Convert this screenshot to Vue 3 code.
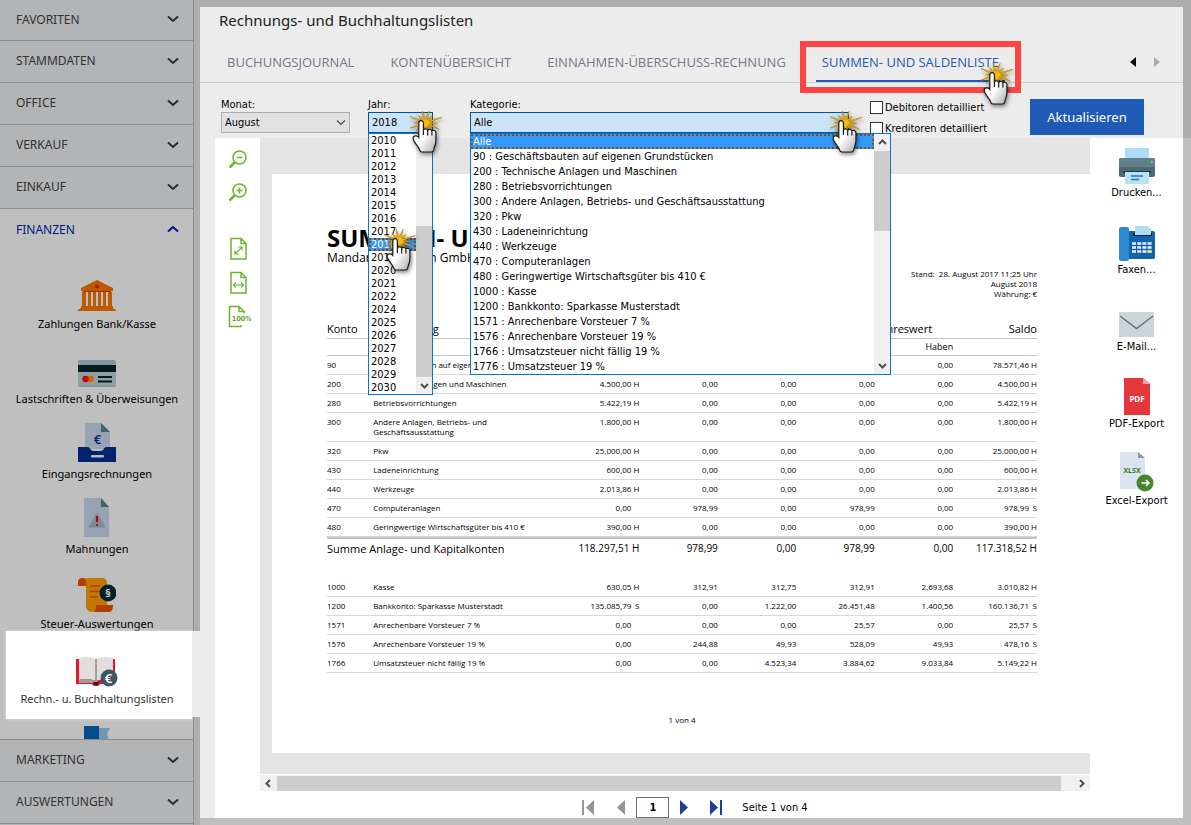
<script setup>
import { ref, computed } from 'vue'

const topSections = ['FAVORITEN', 'STAMMDATEN', 'OFFICE', 'VERKAUF', 'EINKAUF']
const bottomSections = ['MARKETING', 'AUSWERTUNGEN']

const financeItems = [
  { icon: 'bank', label: 'Zahlungen Bank/Kasse' },
  { icon: 'card', label: 'Lastschriften & Überweisungen' },
  { icon: 'inbox', label: 'Eingangsrechnungen' },
  { icon: 'warning', label: 'Mahnungen' },
  { icon: 'tax', label: 'Steuer-Auswertungen' },
  { icon: 'book', label: 'Rechn.- u. Buchhaltungslisten', active: true },
  { icon: 'flag', label: '' }
]

const tabs = ['BUCHUNGSJOURNAL', 'KONTENÜBERSICHT', 'EINNAHMEN-ÜBERSCHUSS-RECHNUNG', 'SUMMEN- UND SALDENLISTE']
const activeTab = ref('SUMMEN- UND SALDENLISTE')

const month = ref('August')
const year = ref('2018')
const category = ref('Alle')
const debitors = ref(false)
const creditors = ref(false)

const years = [
  '2010', '2011', '2012', '2013', '2014', '2015', '2016', '2017', '2018', '2019',
  '2020', '2021', '2022', '2024', '2025', '2026', '2027', '2028', '2029', '2030'
]

const categories = [
  'Alle',
  '90 : Geschäftsbauten auf eigenen Grundstücken',
  '200 : Technische Anlagen und Maschinen',
  '280 : Betriebsvorrichtungen',
  '300 : Andere Anlagen, Betriebs- und Geschäftsausstattung',
  '320 : Pkw',
  '430 : Ladeneinrichtung',
  '440 : Werkzeuge',
  '470 : Computeranlagen',
  '480 : Geringwertige Wirtschaftsgüter bis 410 €',
  '1000 : Kasse',
  '1200 : Bankkonto: Sparkasse Musterstadt',
  '1571 : Anrechenbare Vorsteuer 7 %',
  '1576 : Anrechenbare Vorsteuer 19 %',
  '1766 : Umsatzsteuer nicht fällig 19 %',
  '1776 : Umsatzsteuer 19 %'
]

// konto, name, opening, month debit, month credit, year debit, year credit, balance
const assets = [
  ['90', 'Geschäftsbauten auf eigenen Grundstücken', '78.571,46 H', '0,00', '0,00', '0,00', '0,00', '78.571,46 H'],
  ['200', 'Technische Anlagen und Maschinen', '4.500,00 H', '0,00', '0,00', '0,00', '0,00', '4.500,00 H'],
  ['280', 'Betriebsvorrichtungen', '5.422,19 H', '0,00', '0,00', '0,00', '0,00', '5.422,19 H'],
  ['300', 'Andere Anlagen, Betriebs- und Geschäftsausstattung', '1.800,00 H', '0,00', '0,00', '0,00', '0,00', '1.800,00 H'],
  ['320', 'Pkw', '25.000,00 H', '0,00', '0,00', '0,00', '0,00', '25.000,00 H'],
  ['430', 'Ladeneinrichtung', '600,00 H', '0,00', '0,00', '0,00', '0,00', '600,00 H'],
  ['440', 'Werkzeuge', '2.013,86 H', '0,00', '0,00', '0,00', '0,00', '2.013,86 H'],
  ['470', 'Computeranlagen', '0,00', '978,99', '0,00', '978,99', '0,00', '978,99 S'],
  ['480', 'Geringwertige Wirtschaftsgüter bis 410 €', '390,00 H', '0,00', '0,00', '0,00', '0,00', '390,00 H']
]

const accounts = [
  ['1000', 'Kasse', '630,05 H', '312,91', '312,75', '312,91', '2.693,68', '3.010,82 H'],
  ['1200', 'Bankkonto: Sparkasse Musterstadt', '135.085,79 S', '0,00', '1.222,00', '26.451,48', '1.400,56', '160.136,71 S'],
  ['1571', 'Anrechenbare Vorsteuer 7 %', '0,00', '0,00', '0,00', '25,57', '0,00', '25,57 S'],
  ['1576', 'Anrechenbare Vorsteuer 19 %', '0,00', '244,88', '49,93', '528,09', '49,93', '478,16 S'],
  ['1766', 'Umsatzsteuer nicht fällig 19 %', '0,00', '0,00', '4.523,34', '3.884,62', '9.033,84', '5.149,22 H']
]

const exportsList = [
  { icon: 'printer', label: 'Drucken...' },
  { icon: 'fax', label: 'Faxen...' },
  { icon: 'mail', label: 'E-Mail...' },
  { icon: 'pdf', label: 'PDF-Export' },
  { icon: 'xlsx', label: 'Excel-Export' }
]

const starPoints = computed(() => {
  const outer = [17, 12, 20, 13, 18, 12, 20, 13, 16, 18, 12, 19, 13, 17]
  return outer
    .flatMap((r, i) => {
      const a = (i / outer.length) * Math.PI * 2 - 1.3
      const b = a + Math.PI / outer.length
      return [
        `${(17 + r * 0.9 * Math.cos(a)).toFixed(1)},${(13 + r * 0.72 * Math.sin(a)).toFixed(1)}`,
        `${(17 + 4.5 * Math.cos(b)).toFixed(1)},${(13 + 3.5 * Math.sin(b)).toFixed(1)}`
      ]
    })
    .join(' ')
})

const splitAmount = (value) => value.split(' ')
</script>

<template>
  <div class="app">
    <svg class="defs" aria-hidden="true">
      <defs>
        <linearGradient id="handFill" x1="0" y1="0" x2="1" y2="1">
          <stop offset="0.5" stop-color="#fff" />
          <stop offset="1" stop-color="#aaa" />
        </linearGradient>
      </defs>
      <symbol id="pointer" viewBox="0 0 38 46">
        <polygon :points="starPoints" fill="#f3b90c" stroke="#c58a07" stroke-width="0.7" />
        <path
          d="M10.8 13a2.3 2.3 0 0 1 4.6 0V20c.6-1.7 3.8-1.6 4.300.4.8-1.600 3.700-1.300 4.200.6.900-1.200 4-.6 4 1.600V31c0 4-1.800 5.500-2.200 9-.2 1.400-1 2-2.200 2H14c-1.200 0-2-.7-2.300-1.800-1-4-5.700-7-6.500-11.400-.5-3 3.400-4.200 5.600-1.300Z"
          fill="url(#handFill)"
          stroke="#1b1b1b"
          stroke-width="1.2"
        />
        <path d="M15.400 20v5M19.700 20.500v5M23.900 21.500v4" fill="none" stroke="#1b1b1b" stroke-width="1.200" />
      </symbol>
    </svg>

    <nav class="sidebar">
      <button v-for="name in topSections" :key="name" class="section-head">
        {{ name }}
        <svg width="12" height="8" viewBox="0 0 12 8"><path d="M1 1.500 6 6 11 1.500" /></svg>
      </button>

      <div class="section-open">
        <button class="section-head open">
          FINANZEN
          <svg width="12" height="8" viewBox="0 0 12 8"><path d="M1 6.500 6 2 11 6.500" /></svg>
        </button>
        <ul class="finance">
          <li v-for="item in financeItems" :key="item.icon" :class="{ active: item.active }">
            <a href="#">
              <span class="icon">
                <svg v-if="item.icon === 'bank'" width="40" height="32" viewBox="0 0 40 32">
                  <path d="M20 0 36 8v3H4V8Z" fill="#bd5900" />
                  <circle cx="20" cy="6.500" r="2" fill="#b01800" />
                  <path d="M6 11h28v1H6z" fill="#b02800" />
                  <path d="M5 12h4v14H5zM11 12h3v14h-3zM16 12h3v14h-3zM21 12h3v14h-3zM26 12h3v14h-3zM31 12h4v14h-4zM4 26h32v2H4zM0 31l4-3h32l4 3z" fill="#bd5900" />
                </svg>
                <svg v-else-if="item.icon === 'card'" width="38" height="27" viewBox="0 0 38 27">
                  <rect width="38" height="27" rx="2" fill="#86979b" />
                  <rect y="5" width="38" height="7" fill="#031a22" />
                  <rect y="12" width="38" height="13" fill="#909fa2" />
                  <circle cx="12.500" cy="19" r="3.200" fill="#d06200" />
                  <circle cx="7.500" cy="19" r="3.200" fill="#b80d00" />
                  <path d="M20 17h14M20 21.500h14" stroke="#031a22" stroke-width="2" />
                </svg>
                <svg v-else-if="item.icon === 'inbox'" width="38" height="39" viewBox="0 0 38 39">
                  <path d="M7 0h16l9 9v17H7z" fill="#97a3b3" />
                  <path d="M23 0v9h9z" fill="#4a616b" />
                  <text x="19.500" y="21" class="glyph" font-size="13" fill="#00237a">€</text>
                  <path d="M0 24h10c2 0 2 4 6 4h6c4 0 4-4 6-4h10v15H0z" fill="#00246c" />
                  <rect x="13" y="32" width="13" height="2.500" rx="1" fill="#b5bccb" />
                </svg>
                <svg v-else-if="item.icon === 'warning'" width="26" height="39" viewBox="0 0 26 39">
                  <path d="M0 0h17l8 9v30H0z" fill="#97a3b3" />
                  <path d="M17 0v9h8z" fill="#4a616b" />
                  <path d="M13 15 21 29H5z" fill="#7d8a92" stroke="#7d8a92" />
                  <path d="M13 18v6M13 26v2" stroke="#b0071a" stroke-width="2" />
                </svg>
                <svg v-else-if="item.icon === 'tax'" width="38" height="34" viewBox="0 0 38 34">
                  <path d="M4 0h20c3 0 5 2 5 5v23H19c0 3-2 6-5 6s-6-2-6-6V4z" fill="#c17800" />
                  <path d="M0 8V4c0-3 2-4 4-4s4 1 4 4v4zM15 34c2 0 3-3 3-7h17c0 4-1 7-4 7z" fill="#b33d00" />
                  <path d="M12 8h10M12 13.500h10M12 19h8" stroke="#b33d00" stroke-width="1.500" />
                  <circle cx="30" cy="15" r="8.500" fill="#06202a" />
                  <text x="30" y="19" class="glyph" font-size="11" fill="#dfe6e8">§</text>
                </svg>
                <svg v-else-if="item.icon === 'book'" width="42" height="31" viewBox="0 0 42 31">
                  <path d="M0 3h39v25H24c-1 3-7 3-8 0H0z" fill="#e8142c" />
                  <path d="M3 2c5-2 12-1 17 1v22c-5-2-12-3-17-1zM37 2c-5-2-12-1-17 1v22c5-2 12-3 17-1z" fill="#e2dedd" />
                  <path d="M3 24c5-2 12-1 17 1v2H3zM19 3h2v23h-2z" fill="#a89b98" />
                  <path d="M17 26h6l-1 3h-4z" fill="#222" />
                  <circle cx="33" cy="22" r="8.500" fill="#3f5661" />
                  <text x="32.500" y="27" class="glyph" font-size="13" fill="#fff">€</text>
                </svg>
                <svg v-else width="26" height="40" viewBox="0 0 26 40">
                  <path d="M15 5h11l-3 6 2 6H15z" fill="#7297b5" />
                  <path d="M0 3h15v13H0z" fill="#004c8c" />
                  <path d="M0 16h24v2H0z" fill="#1a3444" />
                </svg>
              </span>
              <span class="label">{{ item.label }}</span>
            </a>
          </li>
        </ul>
      </div>

      <button v-for="name in bottomSections" :key="name" class="section-head">
        {{ name }}
        <svg width="12" height="8" viewBox="0 0 12 8"><path d="M1 1.500 6 6 11 1.500" /></svg>
      </button>
    </nav>

    <main class="main">
      <header class="header">
        <h1>Rechnungs- und Buchhaltungslisten</h1>
        <div class="tab-row">
          <div class="tabs">
            <button
              v-for="tab in tabs"
              :key="tab"
              class="tab"
              :class="{ active: tab === activeTab }"
              @click="activeTab = tab"
            >
              {{ tab }}
              <span v-if="tab === activeTab" class="callout"></span>
              <svg v-if="tab === activeTab" class="pointer on-tab"><use href="#pointer" /></svg>
            </button>
          </div>
          <div class="tab-arrows">
            <button aria-label="Zurück"><svg width="6" height="10"><path d="M6 0v10L0 5z" fill="#000" /></svg></button>
            <button aria-label="Weiter"><svg width="6" height="10"><path d="M0 0v10l6-5z" fill="#a9a9a9" /></svg></button>
          </div>
        </div>
      </header>

      <section class="filters">
        <div class="field month">
          <label for="month">Monat:</label>
          <div class="box">
            <select id="month" v-model="month"><option>August</option></select>
            <svg class="caret" width="10" height="6" viewBox="0 0 10 6"><path d="M1 .5 5 4.500 9 .5" /></svg>
          </div>
        </div>
        <div class="field year">
          <label for="year">Jahr:</label>
          <div class="box">
            <select id="year" v-model="year" class="opened">
              <option v-for="y in years" :key="y">{{ y }}</option>
            </select>
            <div class="popup">
              <ul role="listbox" aria-label="Jahr">
                <li v-for="y in years" :key="y" role="option" :class="{ selected: y === year }">{{ y }}</li>
              </ul>
              <div class="scroll">
                <svg width="9" height="6" viewBox="0 0 9 6"><path d="M1 5 4.500 1.500 8 5" /></svg>
                <div class="track"><div class="thumb low"></div></div>
                <svg width="9" height="6" viewBox="0 0 9 6"><path d="M1 1 4.500 4.500 8 1" /></svg>
              </div>
              <svg class="pointer on-list"><use href="#pointer" /></svg>
            </div>
            <svg class="pointer on-field"><use href="#pointer" /></svg>
          </div>
        </div>
        <div class="field category">
          <label for="category">Kategorie:</label>
          <div class="box">
            <select id="category" v-model="category" class="opened">
              <option v-for="c in categories" :key="c">{{ c }}</option>
            </select>
            <div class="popup">
              <ul role="listbox" aria-label="Kategorie">
                <li v-for="c in categories" :key="c" role="option" :class="{ selected: c === category }">{{ c }}</li>
              </ul>
              <div class="scroll">
                <svg width="9" height="6" viewBox="0 0 9 6"><path d="M1 5 4.500 1.500 8 5" /></svg>
                <div class="track"><div class="thumb"></div></div>
                <svg width="9" height="6" viewBox="0 0 9 6"><path d="M1 1 4.500 4.500 8 1" /></svg>
              </div>
            </div>
            <svg class="pointer on-field"><use href="#pointer" /></svg>
          </div>
        </div>
        <div class="checks">
          <label><input v-model="debitors" type="checkbox" />Debitoren detailliert</label>
          <label><input v-model="creditors" type="checkbox" />Kreditoren detailliert</label>
        </div>
        <button class="refresh">Aktualisieren</button>
      </section>

      <section class="content">
        <div class="workspace">
          <div class="tools">
            <button aria-label="Verkleinern">
              <svg width="20" height="20" viewBox="0 0 20 20"><circle cx="11.500" cy="7.500" r="6.500" /><path d="M8.500 7.500h6" /><path d="M7 12 1.500 17.500" stroke-width="2.500" /></svg>
            </button>
            <button aria-label="Vergrößern">
              <svg width="20" height="20" viewBox="0 0 20 20"><circle cx="11.500" cy="7.500" r="6.500" /><path d="M8.500 7.500h6M11.500 4.500v6" /><path d="M7 12 1.500 17.500" stroke-width="2.500" /></svg>
            </button>
            <button class="spaced" aria-label="Ganze Seite">
              <svg width="18" height="24" viewBox="0 0 18 24"><path d="M2 1.500h10l5 5V22H2zM12 1.500v5h5" /><path d="M6.500 16.500 12.500 10.500M9.500 10H13v3.500M6 13.500V17h3.500" stroke-width="1.200" /></svg>
            </button>
            <button aria-label="Seitenbreite">
              <svg width="18" height="24" viewBox="0 0 18 24"><path d="M2 1.500h10l5 5V22H2zM12 1.500v5h5" /><path d="M4.500 14h10M7 11.500 4.500 14 7 16.500M12 11.500l2.500 2.500-2.500 2.500" stroke-width="1.200" /></svg>
            </button>
            <button class="hundred" aria-label="Originalgröße">
              <svg width="28" height="24" viewBox="-4 0 28 24"><path d="M13 20v1.500H1.500v-20H11l5 5v2M11 1.500v5h5" /><text x="4" y="16">100%</text></svg>
            </button>
          </div>

          <div class="viewer">
            <div class="canvas">
              <article class="page">
                <h2>SUMMEN- UND SALDENLISTE</h2>
                <p class="client">Mandant: Lehmann GmbH</p>
                <p class="meta">Stand:&nbsp; 28. August 2017 11:25 Uhr<br />August 2018<br />Währung: €</p>
                <table>
                  <colgroup>
                    <col class="c-no" /><col class="c-name" /><col class="c-open" /><col class="c-num" />
                    <col class="c-num" /><col class="c-num" /><col class="c-num" /><col class="c-end" />
                  </colgroup>
                  <thead>
                    <tr>
                      <th>Konto</th>
                      <th>Bezeichnung</th>
                      <th class="num">EB-Wert</th>
                      <th class="group" colspan="2">Monatswert</th>
                      <th class="group" colspan="2">Jahreswert</th>
                      <th class="num">Saldo</th>
                    </tr>
                    <tr class="sub">
                      <th colspan="3"></th>
                      <th class="num">Soll</th>
                      <th class="num">Haben</th>
                      <th class="num">Soll</th>
                      <th class="num">Haben</th>
                      <th></th>
                    </tr>
                  </thead>
                  <tbody>
                    <tr v-for="row in assets" :key="row[0]">
                      <td v-for="(cell, i) in row" :key="i" :class="{ num: i > 1 }">
                        <template v-if="i === 2 || i === 7">{{ splitAmount(cell)[0] }}<span class="side">{{ splitAmount(cell)[1] }}</span></template>
                        <template v-else>{{ cell }}</template>
                      </td>
                    </tr>
                    <tr class="sum">
                      <td colspan="2">Summe Anlage- und Kapitalkonten</td>
                      <td class="num">118.297,51 H</td>
                      <td class="num">978,99</td>
                      <td class="num">0,00</td>
                      <td class="num">978,99</td>
                      <td class="num">0,00</td>
                      <td class="num">117.318,52 H</td>
                    </tr>
                    <tr class="gap"><td colspan="8"></td></tr>
                    <tr v-for="row in accounts" :key="row[0]">
                      <td v-for="(cell, i) in row" :key="i" :class="{ num: i > 1 }">
                        <template v-if="i === 2 || i === 7">{{ splitAmount(cell)[0] }}<span class="side">{{ splitAmount(cell)[1] }}</span></template>
                        <template v-else>{{ cell }}</template>
                      </td>
                    </tr>
                  </tbody>
                </table>
                <p class="page-no">1 von 4</p>
              </article>
            </div>
            <div class="hscroll">
              <svg width="6" height="9" viewBox="0 0 6 9"><path d="M5 1 1.500 4.500 5 8" /></svg>
              <div class="htrack"><div class="hthumb"></div></div>
              <svg width="6" height="9" viewBox="0 0 6 9"><path d="M1 1 4.500 4.500 1 8" /></svg>
            </div>
          </div>

          <aside class="exports">
            <button v-for="e in exportsList" :key="e.icon">
              <span class="icon">
                <svg v-if="e.icon === 'printer'" width="36" height="36" viewBox="0 0 36 36">
                  <path d="M6 0h24v12H6z" fill="#aedcf5" />
                  <rect y="10" width="36" height="19" rx="2" fill="#4c6a75" />
                  <path d="M0 12c0-1 1-2 2-2h32c1 0 2 1 2 2v7H0z" fill="#5f7f8a" />
                  <circle cx="33" cy="14" r="1" fill="#8fdc3c" />
                  <path d="M4 23h28v2H4z" fill="#243a44" />
                  <path d="M6 24h24v12H6z" fill="#b9e2f8" />
                  <path d="M12 28h12M12 31.500h8" stroke="#2a75bd" stroke-width="1.500" />
                </svg>
                <svg v-else-if="e.icon === 'fax'" width="36" height="35" viewBox="0 0 36 35">
                  <rect x="8" y="5" width="28" height="28" rx="2" fill="#1262ae" />
                  <rect y="1" width="10" height="34" rx="2" fill="#2a8bce" />
                  <path d="M14 7h19v3H14z" fill="#10222e" />
                  <path d="M16 0h12l4 3v6H16z" fill="#aedcf5" />
                  <path d="M13 17.500h20M13 21.500h20M13 25.500h20" stroke="#e8f4fb" stroke-width="2.600" stroke-dasharray="4 1.200" />
                  <rect x="28.500" y="24.200" width="4" height="2.600" fill="#d8dd7a" />
                </svg>
                <svg v-else-if="e.icon === 'mail'" width="35" height="26" viewBox="0 0 35 26">
                  <rect width="35" height="25" rx="1" fill="#ccd6da" />
                  <path d="M1 4 17.500 16.500 34 4" fill="none" stroke="#587885" stroke-width="1.500" />
                </svg>
                <svg v-else-if="e.icon === 'pdf'" width="26" height="37" viewBox="0 0 26 37">
                  <path d="M0 0h19l7 6v31H0z" fill="#e4373b" />
                  <path d="M19 0v6h7z" fill="#f3a0a2" />
                  <text x="13" y="24" class="glyph heavy" font-size="8" fill="#fff">PDF</text>
                </svg>
                <svg v-else width="35" height="40" viewBox="0 0 35 40">
                  <path d="M1 0h18l7 6v31H1z" fill="#dce4f0" />
                  <path d="M19 0v6h7z" fill="#879ca8" />
                  <text x="13" y="21" class="glyph heavy" font-size="7" fill="#3b7d28">XLSX</text>
                  <circle cx="26" cy="31" r="8.500" fill="#47862f" />
                  <path d="M22.500 31h7M27 28l3 3-3 3" fill="none" stroke="#fff" stroke-width="1.500" />
                </svg>
              </span>
              {{ e.label }}
            </button>
          </aside>
        </div>

        <footer class="pager">
          <button aria-label="Erste Seite"><svg width="13" height="15"><path d="M0 0h2v15H0zM12 0v15L4 7.500z" fill="#959595" /></svg></button>
          <button aria-label="Vorherige Seite"><svg width="8" height="15"><path d="M8 0v15L0 7.500z" fill="#959595" /></svg></button>
          <input type="text" value="1" aria-label="Seite" />
          <button aria-label="Nächste Seite"><svg width="8" height="15"><path d="M0 0v15l8-7.500z" fill="#1f3f96" /></svg></button>
          <button aria-label="Letzte Seite"><svg width="13" height="15"><path d="M0 0v15l8-7.500zM10 0h2v15h-2z" fill="#1f3f96" /></svg></button>
          <span>Seite 1 von 4</span>
        </footer>
      </section>
    </main>
  </div>
</template>

<style>
body {
  margin: 0;
}
</style>

<style scoped>
.app {
  display: flex;
  height: 100vh;
  overflow: hidden;
  background: linear-gradient(#aeaeae 138px, #bfbfbf 138px);
  font-family: 'DejaVu Sans Condensed', 'Noto Sans', sans-serif;
  font-size: 11px;
  color: #000;
}

.defs {
  position: absolute;
  width: 0;
  height: 0;
}

button {
  border: 0;
  padding: 0;
  background: none;
  font: inherit;
  color: inherit;
}

h1,
h2,
p,
ul {
  margin: 0;
  padding: 0;
  list-style: none;
}

svg {
  display: block;
  flex: none;
}

.glyph {
  font-family: 'Noto Sans', sans-serif;
  font-weight: 600;
  text-anchor: middle;
}

.heavy {
  font-weight: 700;
}

.pointer {
  position: absolute;
  z-index: 5;
  width: 38px;
  height: 46px;
  pointer-events: none;
  filter: drop-shadow(1px 2px 2px rgba(0, 0, 0, 0.5));
}

/* sidebar */
.sidebar {
  display: flex;
  flex-direction: column;
  flex: none;
  box-sizing: border-box;
  width: 194px;
  padding-bottom: 1px;
  border-right: 1px solid #8c8c8c;
  background: #b2b4b6;
  box-shadow: 6px 0 0 #aeaeae;
  font-family: 'Noto Sans', sans-serif;
  z-index: 1;
}

.section-head {
  display: flex;
  align-items: center;
  justify-content: space-between;
  flex: none;
  box-sizing: border-box;
  width: 100%;
  height: 42px;
  padding: 0 14px 2px 16px;
  border-bottom: 1px solid #8c8c8c;
  font-size: 12px;
  color: #333;
}

.section-head:first-child {
  height: 41px;
}

.section-head path {
  fill: none;
  stroke: #2b2b2b;
  stroke-width: 2;
}

.section-head.open {
  height: 42px;
  border-bottom: 0;
  color: #00197d;
}

.section-head.open path {
  stroke: #00197d;
}

.section-open {
  flex: 1;
  min-height: 0;
  overflow-x: visible;
  overflow-y: clip;
  border-bottom: 1px solid #8c8c8c;
  background: #bfbfbf;
}

.finance {
  padding-top: 10px;
}

.finance li {
  position: relative;
  height: 75px;
}

.finance a {
  display: flex;
  flex-direction: column;
  align-items: center;
  height: 75px;
  padding: 0 1px 0 2px;
  color: #000;
  text-decoration: none;
}

.finance .icon {
  display: flex;
  align-items: flex-end;
  height: 40px;
  padding-top: 12px;
}

.finance .label {
  line-height: 24px;
  white-space: nowrap;
}

.finance li.active a {
  position: relative;
  z-index: 1;
  color: #333;
}

.finance li.active::before {
  content: '';
  position: absolute;
  inset: -5px 1px -8px 6px;
  background: #fff;
  box-shadow: 0 0 3px #e6e6e6;
}

.finance li.active::after {
  content: '';
  position: absolute;
  top: -5px;
  left: 192px;
  width: 8px;
  height: 86px;
  background: #ececec;
}

/* main area */
.main {
  display: flex;
  flex: 1;
  flex-direction: column;
  min-width: 0;
  margin: 7px 8px 7px 6px;
  background: #ececec;
}

.header {
  border-bottom: 1px solid #cfcfcf;
  font-family: 'Noto Sans', sans-serif;
}

.header h1 {
  padding-left: 19px;
  font-size: 15px;
  font-weight: 400;
  line-height: 26px;
  color: #222;
}

.tab-row {
  display: flex;
  align-items: center;
  justify-content: space-between;
  padding: 8px 23px 0 21px;
}

.tabs {
  display: flex;
  gap: 24px;
}

.tab {
  position: relative;
  height: 41px;
  padding: 2px 6px 0;
  border-bottom: 2px solid transparent;
  font-family: 'Open Sans', 'Noto Sans', sans-serif;
  font-size: 13px;
  white-space: nowrap;
  color: #77778f;
}

.tab.active {
  border-bottom-color: #1f5bb5;
  color: #1f5bb5;
}

.callout {
  position: absolute;
  inset: 0 -16px -13px;
  border: 6px solid #ff4444;
}

.pointer.on-tab {
  top: 21px;
  right: -12px;
}

.tab-arrows {
  display: flex;
  gap: 18px;
}

.filters {
  display: flex;
  align-items: flex-start;
  height: 40px;
  padding: 15px 39px 0 21px;
}

.field {
  line-height: 14px;
}

.field label {
  display: block;
}

.month {
  width: 129px;
  margin-right: 18px;
}

.year {
  width: 65px;
  margin-right: 37px;
}

.category {
  flex: 0 1 379px;
  margin-right: 21px;
}

.box {
  position: relative;
}

select {
  display: block;
  appearance: none;
  box-sizing: border-box;
  width: 100%;
  height: 21px;
  padding: 0 3px;
  border: 1px solid #adadad;
  border-radius: 0;
  background: #e1e1e1;
  font: inherit;
  color: #000;
}

select.opened {
  border-color: #005499;
  background: #cce4f7;
}

.caret {
  position: absolute;
  top: 8px;
  right: 4px;
  fill: none;
  stroke: #505050;
  stroke-width: 1.2;
}

.popup {
  position: absolute;
  top: 100%;
  left: 0;
  z-index: 3;
  display: flex;
  box-sizing: border-box;
  width: 100%;
  border: 1px solid #0078d7;
  background: #fff;
}

.category .popup {
  width: calc(100% + 42px);
}

.popup ul {
  flex: 1;
  min-width: 0;
}

.popup li {
  box-sizing: border-box;
  height: 15px;
  padding: 1px 0 0 2px;
  line-height: 14px;
  white-space: nowrap;
}

.year .popup li {
  height: 13px;
  line-height: 12px;
}

.popup li.selected {
  outline: 2px dotted #8a4a12;
  outline-offset: -2px;
  background: #3399ff;
  color: #fff;
}

.scroll {
  display: flex;
  flex-direction: column;
  align-items: center;
  flex: none;
  width: 16px;
  padding: 5px 0;
  gap: 6px;
  box-sizing: border-box;
  background: #f0f0f0;
}

.scroll path {
  fill: none;
  stroke: #505050;
  stroke-width: 2;
}

.track {
  display: flex;
  flex: 1;
  flex-direction: column;
  width: 100%;
}

.thumb {
  height: 39%;
  background: #cdcdcd;
}

.thumb.low {
  height: 67%;
  margin-top: auto;
}

.pointer.on-field {
  top: -2px;
  right: -13px;
}

.category .pointer.on-field {
  right: -17px;
}

.pointer.on-list {
  top: 94px;
  left: 13px;
}

.checks {
  display: flex;
  flex-direction: column;
  gap: 8px;
  padding-top: 3px;
}

.checks label {
  display: flex;
  align-items: center;
  gap: 2px;
  height: 13px;
  white-space: nowrap;
}

.checks input {
  appearance: none;
  box-sizing: border-box;
  width: 13px;
  height: 13px;
  margin: 0;
  border: 1px solid #333;
  background: #fff;
}

.refresh {
  flex: none;
  width: 114px;
  height: 36px;
  margin: 1px 0 0 auto;
  background: #1f5bb5;
  font-family: 'Noto Sans', sans-serif;
  font-size: 13px;
  color: #fff;
}

/* report area */
.content {
  display: flex;
  flex: 1;
  flex-direction: column;
  min-height: 0;
  margin-left: 15px;
  background: #fff;
}

.workspace {
  display: flex;
  flex: 1;
  min-height: 0;
}

.tools {
  display: flex;
  flex-direction: column;
  align-items: center;
  gap: 13px;
  flex: none;
  width: 45px;
  padding-top: 12px;
}

.tools button {
  height: 20px;
}

.tools svg {
  fill: none;
  stroke: #6cb52d;
  stroke-width: 1.5;
}

.tools .spaced,
.tools .spaced ~ button {
  height: 24px;
  margin-bottom: -3px;
}

.tools .spaced {
  margin-top: 21px;
}

.tools text {
  fill: #5ea524;
  stroke: none;
  font-size: 7px;
  font-weight: 700;
}

.viewer {
  display: flex;
  flex: 1;
  flex-direction: column;
  min-width: 0;
}

.canvas {
  flex: 1;
  min-height: 0;
  overflow: hidden;
  padding: 36px 0 0 12px;
  background: #e4e4e4;
}

.page {
  padding: 50px 53px 28px 55px;
  background: #fff;
  font-family: 'Open Sans', 'Noto Sans', sans-serif;
}

.page h2 {
  font-size: 24px;
  font-weight: 700;
  line-height: 28px;
  white-space: nowrap;
}

.client {
  font-size: 12px;
  line-height: 12px;
}

.meta {
  margin-top: 5px;
  font-size: 8px;
  line-height: 10px;
  text-align: right;
}

table {
  width: 100%;
  margin-top: 20px;
  border-collapse: separate;
  border-spacing: 0;
  table-layout: fixed;
}

.c-no {
  width: 6.5%;
}

.c-name {
  width: 23.2%;
}

.c-open {
  width: 14.3%;
}

.c-num {
  width: 11.05%;
}

.c-end {
  width: 11.8%;
}

th {
  height: 19px;
  padding: 0;
  border-bottom: 1px solid #c4c4c4;
  font-size: 11px;
  font-weight: 400;
  line-height: 19px;
  text-align: left;
}

.sub th {
  height: 16px;
  font-size: 9px;
  line-height: 16px;
}

th.group {
  padding-right: 21px;
  text-align: right;
}

td {
  padding: 4px 0;
  border-bottom: 1px solid #d8d8d8;
  font-size: 8px;
  line-height: 10px;
  vertical-align: top;
}

th.num,
td.num {
  text-align: right;
}

.side {
  display: inline-block;
  width: 8px;
}

.sum td {
  padding: 0;
  border-top: 2px solid #c4c4c4;
  border-bottom: 0;
  font-size: 11px;
  line-height: 19px;
}

.sum td.num {
  font-size: 10px;
}

.gap td {
  height: 20px;
  padding: 0;
  border: 0;
}

.page-no {
  margin-top: 42px;
  font-size: 8px;
  line-height: 10px;
  text-align: center;
}

.hscroll {
  display: flex;
  align-items: center;
  gap: 6px;
  height: 16px;
  margin-top: 1px;
  padding: 0 5px;
  background: #f0f0f0;
}

.hscroll path {
  fill: none;
  stroke: #505050;
  stroke-width: 2;
}

.htrack {
  flex: 1;
  height: 15px;
}

.hthumb {
  width: 98.5%;
  height: 15px;
  background: #cdcdcd;
}

.exports {
  display: flex;
  flex-direction: column;
  gap: 19px;
  flex: none;
  width: 93px;
  padding-top: 6px;
}

.exports button {
  line-height: 18px;
}

.exports .icon {
  display: flex;
  align-items: flex-end;
  justify-content: center;
  height: 40px;
}

.pager {
  display: flex;
  align-items: center;
  justify-content: center;
  gap: 11px;
  box-sizing: border-box;
  height: 27px;
  padding: 6px 8px 0 0;
}

.pager button:first-child,
.pager button:nth-child(4) {
  margin-right: 11px;
}

.pager input {
  box-sizing: border-box;
  width: 33px;
  height: 21px;
  padding: 0;
  border: 1px solid #707070;
  background: #fff;
  font: inherit;
  font-weight: 700;
  text-align: center;
}

.pager span {
  margin-left: 8px;
}
</style>
